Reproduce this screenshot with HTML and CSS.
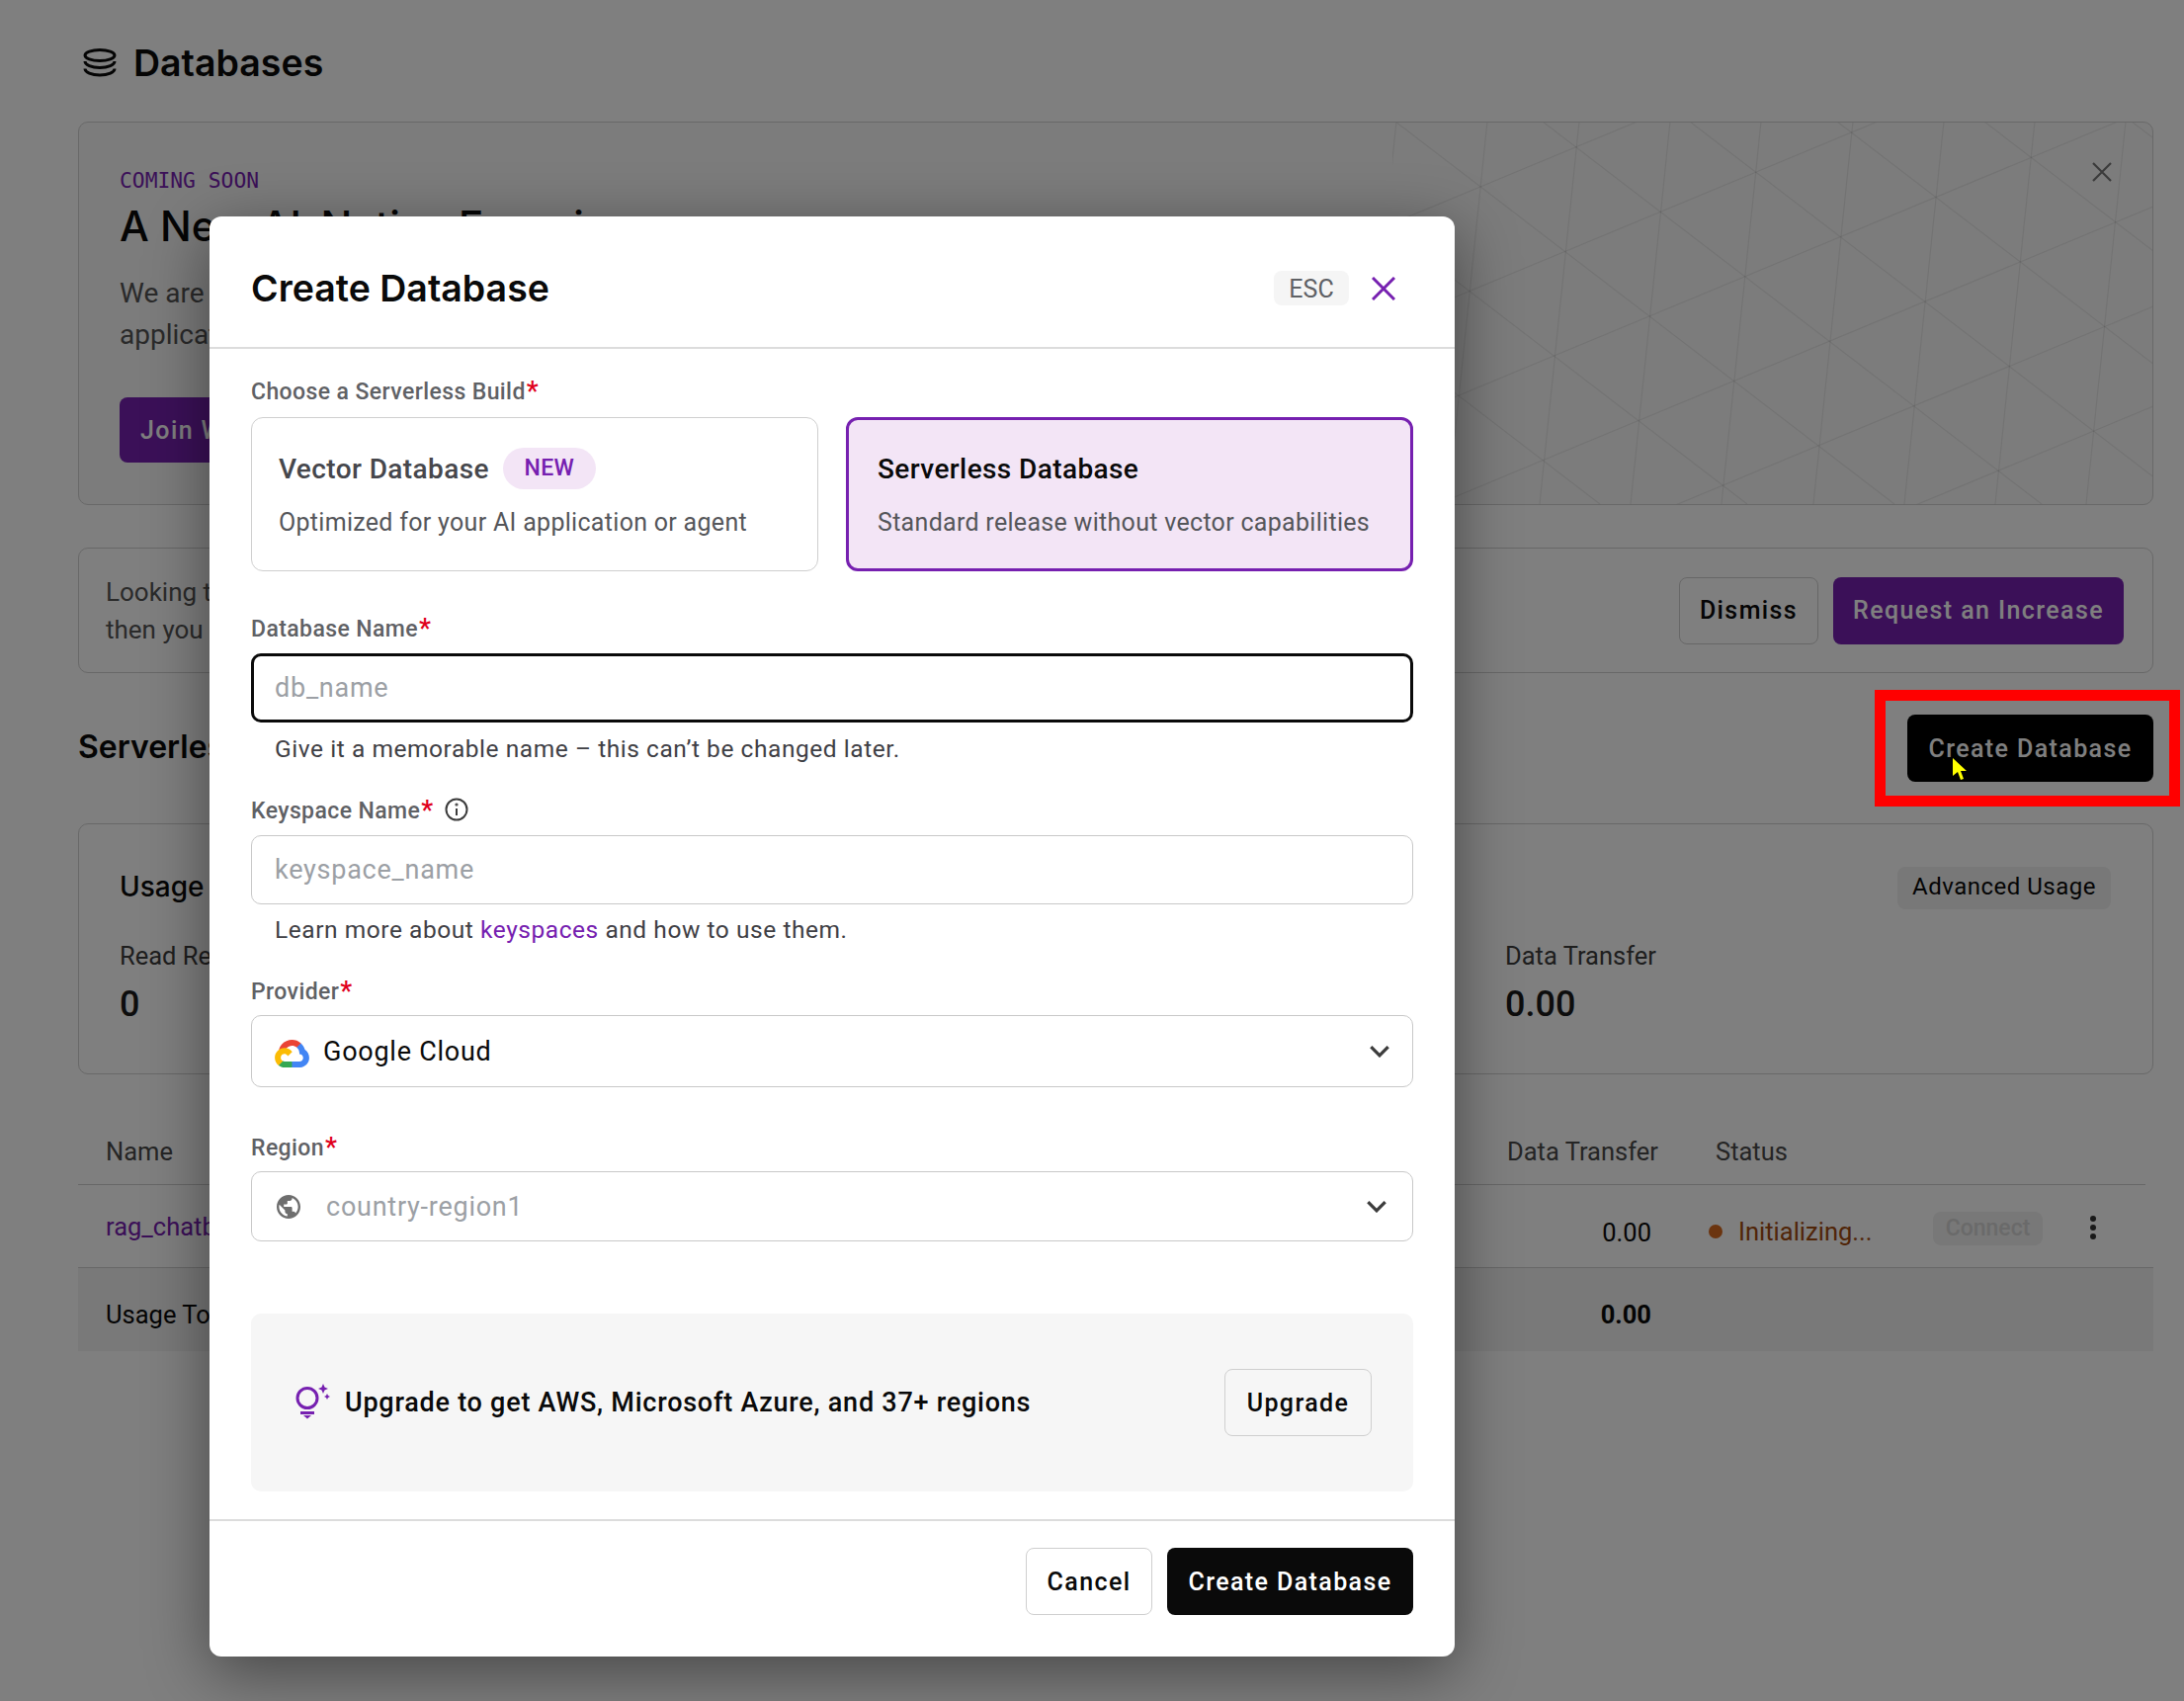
FILE: index.html
```html
<!DOCTYPE html>
<html lang="en">
  <head>
    <meta charset="UTF-8" />
    <meta name="viewport" content="width=device-width, initial-scale=1.0" />
    <title>Databases</title>
    <link rel="stylesheet" href="styles.css">
  </head>
  <body>
    <div class="page">
      <header class="page-head">
        <svg class="db-icon" viewBox="0 0 34 30" fill="none" stroke="#0a0a0a" stroke-width="3">
          <ellipse cx="17" cy="7" rx="15" ry="5.5" />
          <path d="M2 13c0 3.500 6.700 6.500 15 6.500s15-3 15-6.500" />
          <path d="M2 20.500c0 3.500 6.700 6.500 15 6.500s15-3 15-6.500" />
        </svg>
        <h1>Databases</h1>
      </header>

      <section class="banner">
        <svg class="banner-grid" viewBox="0 0 770 387" stroke="#000" stroke-opacity="0.07" stroke-width="1.2">
          <path d="M4 0L-36 387M96 0L56 387M189 0L149 387M281 0L241 387M373 0L333 387M466 0L426 387M558 0L518 387M650 0L610 387M742 0L702 387" />
          <path d="M-444 0L61 387M-295 0L210 387M-146 0L359 387M3 0L508 387M152 0L657 387M301 0L806 387M450 0L955 387M599 0L1104 387M748 0L1253 387" />
          <path d="M0 103L770 -217M0 204L770 -116M0 305L770 -15M0 406L770 86M0 507L770 187M0 608L770 288M0 709L770 389" />
        </svg>
        <p class="banner-tag">COMING SOON</p>
        <h2 class="banner-title">A New AI-Native Experience</h2>
        <p class="banner-text">We are building something<br>applications and agents</p>
        <button class="btn btn-purple banner-btn">Join Waitlist</button>
        <svg class="banner-close" viewBox="0 0 20 20" fill="none" stroke="#777" stroke-width="2.200">
          <path d="M1 1l18 18M19 1L1 19" />
        </svg>
      </section>

      <section class="notice">
        <p>Looking to create more<br>then you can request</p>
        <div class="notice-actions">
          <button class="btn btn-outline dismiss">Dismiss</button>
          <button class="btn btn-purple request">Request an Increase</button>
        </div>
      </section>

      <div class="section-head">
        <h2>Serverless Databases</h2>
        <button class="btn btn-black head-create">Create Database</button>
      </div>

      <section class="usage">
        <div class="usage-top">
          <h3>Usage</h3>
          <button class="chip-advanced">Advanced Usage</button>
        </div>
        <div class="usage-stats">
          <div>
            <p class="stat-label">Read Requests</p>
            <p class="stat-value">0</p>
          </div>
          <div>
            <p class="stat-label">Data Transfer</p>
            <p class="stat-value">0.00</p>
          </div>
        </div>
      </section>

      <div class="db-table">
        <div class="tr tr-head">
          <span>Name</span>
          <span>Data Transfer</span>
          <span>Status</span>
        </div>
        <div class="tr tr-body">
          <span class="db-link">rag_chatbot</span>
          <span class="num">0.00</span>
          <span class="status"><i class="status-dot"></i>Initializing...</span>
          <span class="connect">Connect</span>
          <span class="kebab"><i></i><i></i><i></i></span>
        </div>
        <div class="tr tr-total">
          <span>Usage Total</span>
          <span class="num">0.00</span>
        </div>
      </div>
    </div>

    <div class="overlay"></div>

    <div class="annotation"></div>
    <svg class="cursor" viewBox="0 0 14 22"><path d="M0 0L14 13H8L11 21L8 22L5 14L0 18Z" fill="#ffff00" /></svg>

    <div class="modal">
      <div class="modal-head">
        <h2>Create Database</h2>
        <span class="esc">ESC</span>
        <svg class="modal-close" viewBox="0 0 24 24" fill="none" stroke="#7620b0" stroke-width="3">
          <path d="M1 1l22 22M23 1L1 23" />
        </svg>
      </div>

      <div class="modal-body">
        <label class="label label-first">Choose a Serverless Build<b>*</b></label>
        <div class="builds">
          <div class="build">
            <div class="build-title">Vector Database <span class="new">NEW</span></div>
            <p>Optimized for your AI application or agent</p>
          </div>
          <div class="build build-on">
            <div class="build-title">Serverless Database</div>
            <p>Standard release without vector capabilities</p>
          </div>
        </div>

        <label class="label label-name">Database Name<b>*</b></label>
        <input class="input input-focus" placeholder="db_name" />
        <p class="help help-first">Give it a memorable name – this can’t be changed later.</p>

        <label class="label label-keyspace">Keyspace Name<b>*</b>
          <svg class="info" viewBox="0 0 24 24" fill="none" stroke="#3c3c3c" stroke-width="2">
            <circle cx="12" cy="12" r="10.500" />
            <path d="M12 11v7" />
            <circle cx="12" cy="7" r="0.600" />
          </svg>
        </label>
        <input class="input" placeholder="keyspace_name" />
        <p class="help">Learn more about <a href="#">keyspaces</a> and how to use them.</p>

        <label class="label label-provider">Provider<b>*</b></label>
        <div class="select select-provider">
          <svg class="gcp" viewBox="0 0 256 206">
            <path fill="#EA4335" d="M170.250 56.820L192.500 34.570L193.990 25.200C153.440 -11.680 88.980 -7.500 52.420 33.920C42.270 45.420 34.730 59.760 30.720 74.570L38.690 73.450L83.290 66.090L86.740 62.570C106.580 40.780 140.130 37.850 163.040 56.390L170.250 56.820Z" />
            <path fill="#4285F4" d="M224.200 73.920C219.080 55.040 208.550 38.070 193.990 25.200L162.680 56.500C175.900 67.300 183.430 83.580 183.110 100.640V106.200C198.500 106.200 210.970 118.680 210.970 134.060C210.970 149.450 198.500 161.610 183.110 161.610H127.310L121.830 167.560V200.980L127.310 206.220H183.110C223.130 206.540 255.830 174.660 256.140 134.640C256.330 110.380 244.370 87.640 224.200 73.920" />
            <path fill="#34A853" d="M71.870 205.800H127.590V161.190H71.870C67.900 161.190 64.060 160.340 60.450 158.690L52.540 161.110L30.080 183.410L28.120 191C40.720 200.510 56.090 205.860 71.870 205.800" />
            <path fill="#FBBC05" d="M71.870 61.430C31.850 61.660 -0.400 94.300 0 134.320C0.220 156.700 10.690 177.710 28.120 191L60.450 158.680C46.420 152.350 40.190 135.840 46.520 121.820C52.860 107.800 69.370 101.560 83.390 107.900C89.560 110.690 94.510 115.640 97.300 121.820L129.630 89.490C115.870 71.520 94.510 61 71.870 61.430" />
          </svg>
          <span class="select-text">Google Cloud</span>
          <svg class="chev" viewBox="0 0 20 12" fill="none" stroke="#3c3c3c" stroke-width="3"><path d="M2 2l8 8 8-8" /></svg>
        </div>

        <label class="label label-region">Region<b>*</b></label>
        <div class="select select-region">
          <svg class="globe" viewBox="2 2 20 20"><path fill="#6e6e6e" d="M12 2C6.480 2 2 6.480 2 12s4.480 10 10 10 10-4.480 10-10S17.520 2 12 2zm-1 17.930c-3.950-.49-7-3.850-7-7.930 0-.62.08-1.210.21-1.790L9 15v1c0 1.100.9 2 2 2v1.930zm6.900-2.540c-.26-.81-1-1.390-1.900-1.390h-1v-3c0-.55-.45-1-1-1H8v-2h2c.55 0 1-.45 1-1V7h2c1.100 0 2-.9 2-2v-.41c2.930 1.190 5 4.060 5 7.410 0 2.080-.8 3.970-2.100 5.390z" /></svg>
          <span class="select-text muted">country-region1</span>
          <svg class="chev" viewBox="0 0 20 12" fill="none" stroke="#3c3c3c" stroke-width="3"><path d="M2 2l8 8 8-8" /></svg>
        </div>

        <div class="upgrade">
          <svg class="bulb" viewBox="0 0 38 36" fill="none">
            <circle cx="13" cy="13.500" r="10" stroke="#7620b0" stroke-width="3" />
            <path fill="#7620b0" d="M6 27h14v3H6zM9 31h8l-4 3.500zM29 -1l1.500 3.500L34 4l-3.500 1.500L29 9l-1.500-3.500L24 4l3.500-1.500zM33 9l1 2 2 1-2 1-1 2-1-2-2-1 2-1z" />
          </svg>
          <span class="upgrade-text">Upgrade to get AWS, Microsoft Azure, and 37+ regions</span>
          <button class="btn btn-outline upgrade-btn">Upgrade</button>
        </div>
      </div>

      <div class="modal-foot">
        <button class="btn btn-outline cancel">Cancel</button>
        <button class="btn btn-black foot-create">Create Database</button>
      </div>
    </div>
  </body>
</html>
```

FILE: styles.css
```css
* {
  box-sizing: border-box;
}
html,
body {
  margin: 0;
  height: 1721px;
  overflow: hidden;
}
body {
  font-family: Roboto, Arial, sans-serif;
  background-color: #fff;
  color: #0a0a0a;
  position: relative;
}
h1,
h2,
h3,
p {
  margin: 0;
}
button {
  font-family: inherit;
}

.page {
  padding: 42px 31px 0 79px;
}
.page-head {
  display: flex;
  align-items: center;
  gap: 17px;
  height: 44px;
}
.db-icon {
  width: 34px;
  height: 30px;
  margin-left: 5px;
}
.page-head h1 {
  font-family: Inter, sans-serif;
  font-size: 37.500px;
  font-weight: 600;
  line-height: 44px;
}

.btn {
  border-radius: 8px;
  border: 0;
  font-size: 25px;
  font-weight: 500;
  letter-spacing: 1.4px;
  cursor: pointer;
}
.btn-outline {
  background-color: transparent;
  border: 1px solid #cfcfcf;
  color: #0a0a0a;
}
.btn-purple {
  background-color: #7620b0;
  color: #fff;
}
.btn-black {
  background-color: #000;
  color: #fff;
}

.banner {
  position: relative;
  height: 388px;
  margin-top: 37px;
  padding: 46px 41px;
  border: 1px solid #d0d0d0;
  border-radius: 10px;
  background-color: #f8f8f8;
  overflow: hidden;
}
.banner-grid {
  position: absolute;
  top: -1px;
  right: -1px;
  width: 770px;
  height: 387px;
}
.banner-tag {
  font-family: "DejaVu Sans Mono", monospace;
  font-size: 21.300px;
  line-height: 24px;
  margin-top: 1px;
  color: #7620b0;
}
.banner-title {
  font-family: Inter, sans-serif;
  font-size: 42px;
  font-weight: 500;
  line-height: 54px;
  margin-top: 7px;
}
.banner-text {
  font-size: 28px;
  line-height: 42px;
  color: #555;
  margin-top: 20px;
}
.banner-btn {
  width: 240px;
  height: 66px;
  margin-top: 42px;
  text-align: left;
  padding-left: 21px;
}
.banner-close {
  position: absolute;
  top: 40px;
  right: 41px;
  width: 20px;
  height: 20px;
}

.notice {
  display: flex;
  justify-content: space-between;
  align-items: center;
  height: 127px;
  margin-top: 43px;
  padding: 0 29px 0 27px;
  border: 1px solid #d0d0d0;
  border-radius: 10px;
  font-size: 26px;
  line-height: 38px;
  color: #555;
}
.notice-actions {
  display: flex;
  gap: 15px;
}
.dismiss {
  width: 141px;
  height: 68px;
}
.request {
  width: 294px;
  height: 68px;
}

.section-head {
  display: flex;
  justify-content: space-between;
  align-items: center;
  height: 68px;
  margin-top: 42px;
}
.section-head h2 {
  font-family: Inter, sans-serif;
  font-size: 32px;
  font-weight: 600;
  margin-bottom: 3px;
}
.head-create {
  width: 249px;
  height: 68px;
}

.usage {
  height: 254px;
  margin-top: 42px;
  padding: 42px 43px 0 41px;
  border: 1px solid #d0d0d0;
  border-radius: 10px;
}
.usage-top {
  display: flex;
  justify-content: space-between;
  align-items: flex-start;
}
.usage-top h3 {
  font-family: Inter, sans-serif;
  font-size: 28px;
  font-weight: 500;
  line-height: 42px;
}
.chip-advanced {
  width: 216px;
  height: 43px;
  margin-right: -1px;
  margin-top: 1px;
  padding-bottom: 5px;
  border: 0;
  border-radius: 8px;
  background-color: #f0f0f0;
  color: #0a0a0a;
  font-size: 24px;
  letter-spacing: 0.5px;
}
.usage-stats {
  display: grid;
  grid-template-columns: 1402px 1fr;
  margin-top: 32px;
}
.stat-label {
  font-size: 25.500px;
  line-height: 30px;
  color: #3c3c3c;
}
.stat-value {
  font-size: 36px;
  font-weight: 500;
  line-height: 44px;
  margin-top: 12px;
  color: #1a1a1a;
}

.db-table {
  margin-top: 52px;
}
.tr {
  display: grid;
  grid-template-columns: 1418px 211px 220px 140px 1fr;
  padding-left: 28px;
  font-size: 25.500px;
  align-items: center;
}
.tr-head {
  height: 60px;
  padding-bottom: 8px;
  margin-right: 8px;
  border-bottom: 1px solid #cfcfcf;
  color: #4a4a4a;
}
.tr-body {
  height: 84px;
  border-bottom: 1px solid #cfcfcf;
}
.tr-total {
  height: 84px;
  padding-top: 10px;
  background-color: #f2f2f2;
}
.db-link {
  color: #7620b0;
}
.num {
  text-align: right;
  padding-right: 65px;
}
.tr-body .num {
  margin-top: 12px;
}
.status {
  margin-top: 10px;
}
.tr-total .num {
  font-weight: 700;
}
.status {
  display: flex;
  align-items: center;
  gap: 16px;
  color: #a14a10;
}
.status-dot {
  width: 14px;
  height: 14px;
  margin-left: -7px;
  border-radius: 50%;
  background-color: #d6681f;
}
.connect {
  width: 111px;
  height: 34px;
  margin-top: 4px;
  border-radius: 8px;
  background-color: #f0f0f0;
  color: #d5d5d5;
  font-size: 23px;
  font-weight: 500;
  line-height: 34px;
  text-align: center;
}
.kebab {
  display: flex;
  flex-direction: column;
  gap: 3px;
  margin-top: 2px;
  margin-left: 19px;
}
.kebab i {
  width: 6px;
  height: 6px;
  border-radius: 50%;
  background-color: #333;
}

.overlay {
  position: absolute;
  inset: 0;
  background-color: rgba(0, 0, 0, 0.5);
}
.annotation {
  position: absolute;
  left: 1897px;
  top: 698px;
  width: 309px;
  height: 118px;
  border: 11px solid #ff0000;
}
.cursor {
  position: absolute;
  left: 1976px;
  top: 767px;
  width: 14px;
  height: 22px;
}

.modal {
  position: absolute;
  left: 212px;
  top: 219px;
  width: 1260px;
  height: 1457px;
  display: flex;
  flex-direction: column;
  border-radius: 12px;
  background-color: #fff;
  box-shadow: 0 16px 64px rgba(0, 0, 0, 0.45);
}
.modal-head {
  display: flex;
  align-items: center;
  height: 134px;
  padding: 13px 0 0 42px;
  border-bottom: 2px solid #dcdcdc;
}
.modal-head h2 {
  font-family: Inter, sans-serif;
  font-size: 37.500px;
  font-weight: 600;
  flex: 1;
}
.esc {
  width: 76px;
  height: 35px;
  border-radius: 8px;
  background-color: #f5f5f5;
  color: #5f6165;
  font-size: 25px;
  line-height: 37px;
  text-align: center;
}
.modal-close {
  width: 24px;
  height: 24px;
  margin: 0 60px 0 23px;
}
.modal-body {
  flex: 1;
  padding: 0 42px;
}

.label {
  display: flex;
  align-items: center;
  font-size: 23px;
  font-weight: 500;
  letter-spacing: 0.4px;
  line-height: 26px;
  color: #5f6165;
}
.label b {
  color: #e0001b;
  font-size: 27px;
  font-weight: 500;
  line-height: 24px;
  margin-left: 1px;
  align-self: flex-start;
}
.label-first {
  margin-top: 31px;
}
.label-name {
  margin-top: 46px;
}
.label-keyspace {
  margin-top: 36px;
}
.label-provider {
  margin-top: 36px;
}
.label-region {
  margin-top: 49px;
}
.info {
  width: 24px;
  height: 24px;
  margin-left: 11px;
  margin-top: -4px;
}

.builds {
  display: grid;
  grid-template-columns: 574px 574px;
  gap: 28px;
  margin-top: 12px;
}
.build {
  height: 156px;
  padding: 30px 27px 0;
  border: 1px solid #cfcfcf;
  border-radius: 12px;
  color: #55565a;
  font-size: 25px;
  letter-spacing: 0.3px;
}
.build p {
  line-height: 28px;
  margin-top: 20px;
}
.build-on {
  padding: 28px 29px 0;
  border: 3px solid #7620b0;
  background-color: #f3e5f6;
}
.build-title {
  display: flex;
  align-items: center;
  gap: 14px;
  height: 42px;
  color: #46474c;
  font-size: 28px;
  font-weight: 500;
  letter-spacing: 0.4px;
}
.build-on .build-title {
  color: #0a0a0a;
}
.new {
  width: 94px;
  height: 42px;
  border-radius: 21px;
  background-color: #f3e5f6;
  color: #7620b0;
  font-size: 23px;
  line-height: 42px;
  text-align: center;
}

.input {
  display: block;
  width: 100%;
  height: 70px;
  margin-top: 11px;
  padding: 0 23px;
  border: 1px solid #c8c8c8;
  border-radius: 10px;
  font-family: inherit;
  font-size: 27px;
  letter-spacing: 0.75px;
  outline: none;
}
.input::placeholder {
  color: #9ca0a5;
  opacity: 1;
}
.input-focus {
  border: 3px solid #0a0a0a;
  padding: 0 21px;
}
.help {
  margin-top: 12px;
  padding-left: 24px;
  font-size: 24.500px;
  letter-spacing: 0.55px;
  line-height: 28px;
  color: #3f4045;
}
.help-first {
  margin-top: 13px;
}
.help a {
  color: #7620b0;
  text-decoration: none;
}

.select {
  display: flex;
  align-items: center;
  border: 1px solid #c8c8c8;
  border-radius: 10px;
}
.select-provider {
  height: 73px;
  margin-top: 10px;
  padding-left: 23px;
  padding-right: 22px;
}
.select-region {
  height: 71px;
  margin-top: 10px;
  padding-left: 25px;
  padding-right: 25px;
}
.select-text {
  flex: 1;
  font-size: 27px;
  letter-spacing: 0.75px;
}
.muted {
  color: #9ca0a5;
}
.gcp {
  width: 35px;
  height: 28px;
  margin-right: 14px;
  margin-top: 4px;
}
.globe {
  width: 24px;
  height: 24px;
  margin-right: 26px;
}
.chev {
  width: 22px;
  height: 13px;
}

.upgrade {
  display: flex;
  align-items: center;
  height: 180px;
  margin-top: 73px;
  padding: 0 42px 0 44px;
  border-radius: 10px;
  background-color: #f6f6f6;
}
.bulb {
  width: 38px;
  height: 36px;
  overflow: visible;
  margin-right: 13px;
}
.upgrade-text {
  flex: 1;
  font-size: 27px;
  font-weight: 500;
  letter-spacing: 0.75px;
}
.upgrade-btn {
  width: 149px;
  height: 68px;
}

.modal-foot {
  display: flex;
  justify-content: flex-end;
  gap: 15px;
  height: 139px;
  padding: 27px 42px 0;
  border-top: 2px solid #dcdcdc;
}
.cancel {
  width: 128px;
  height: 68px;
  background-color: #fff;
}
.foot-create {
  width: 249px;
  height: 68px;
  background-color: #0a0a0a;
}
```
